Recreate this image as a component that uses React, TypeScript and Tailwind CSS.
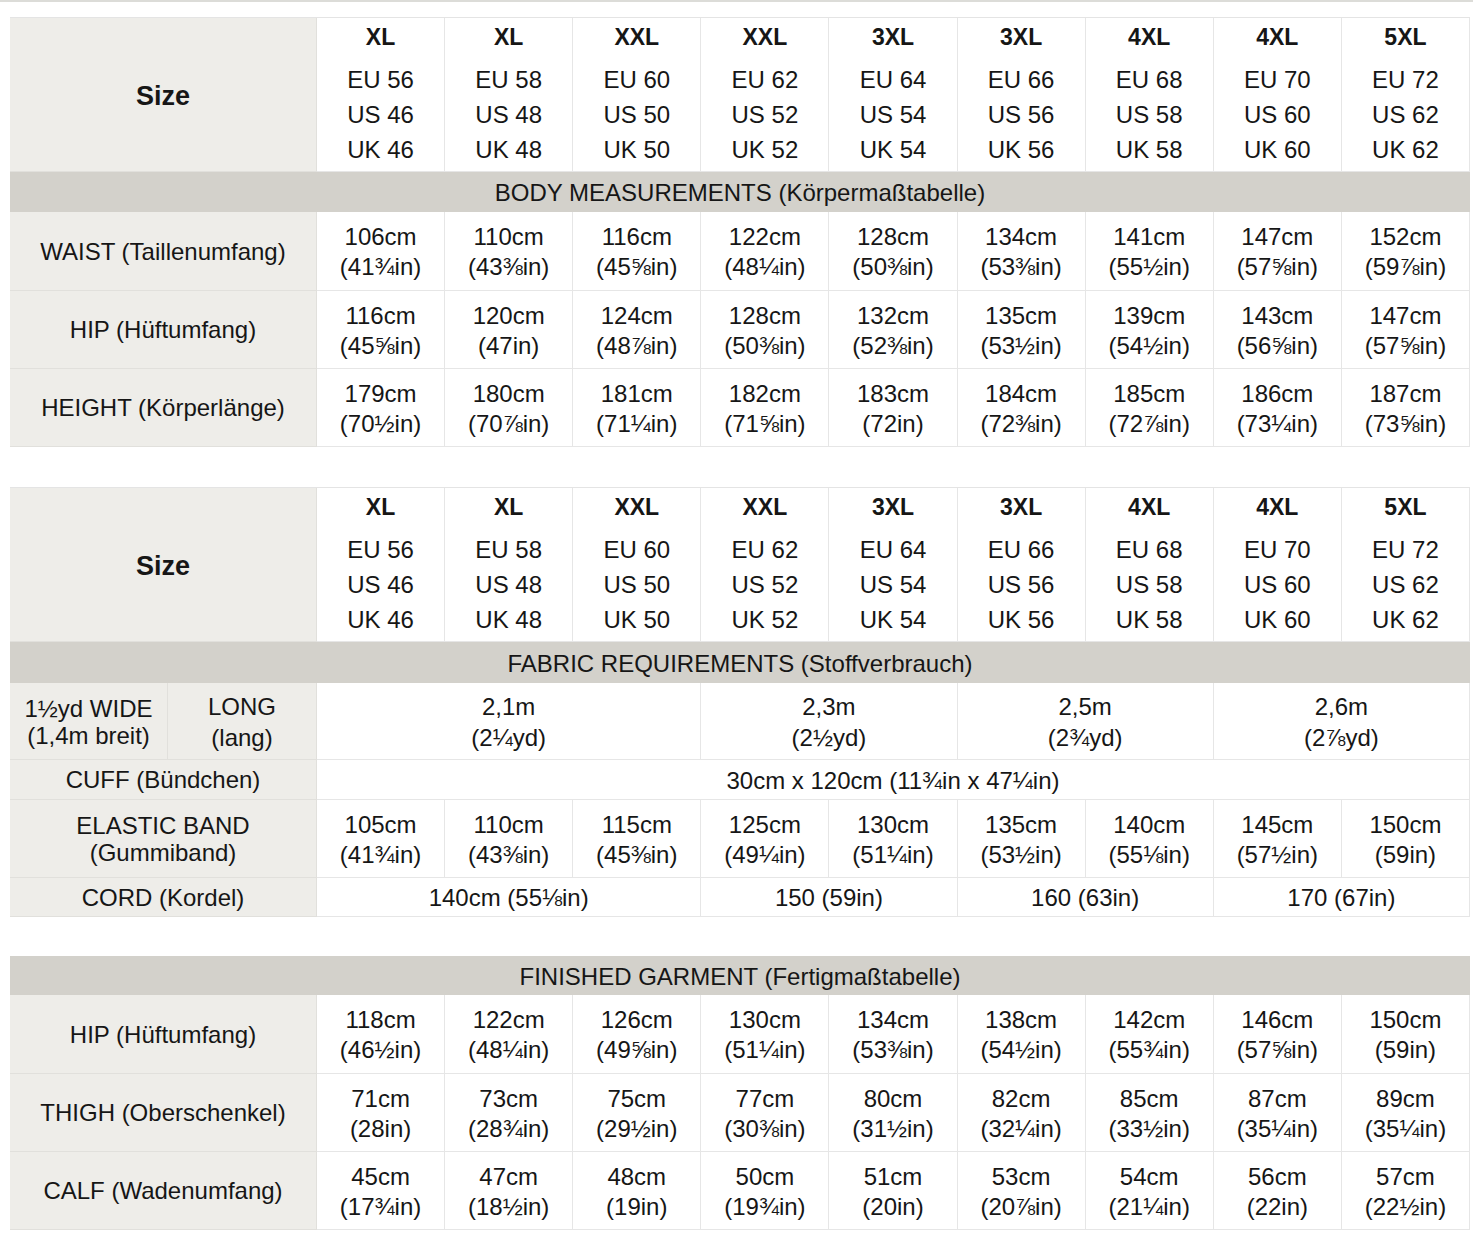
import React from "react";

const GRID =
  "grid grid-cols-[158px_149px_repeat(9,minmax(0,1fr))] w-[1460px]";
const LABEL =
  "bg-[#eeede9] border-b border-r border-[#e1e0dc] flex flex-col items-center justify-center text-center pt-[1px]";
const CELL =
  "bg-white border-b border-r border-[#e6e6e6] flex flex-col items-center justify-center text-center pt-[2px]";
const BAR =
  "col-span-11 bg-[#d3d1cb] flex items-center justify-center leading-none pt-[2px]";

const sizes = ["XL", "XL", "XXL", "XXL", "3XL", "3XL", "4XL", "4XL", "5XL"];
const eu = [56, 58, 60, 62, 64, 66, 68, 70, 72];
const us = [46, 48, 50, 52, 54, 56, 58, 60, 62];

type Pair = [string, string];

const body: { label: string; vals: Pair[] }[] = [
  {
    label: "WAIST (Taillenumfang)",
    vals: [
      ["106cm", "(41¾in)"],
      ["110cm", "(43⅜in)"],
      ["116cm", "(45⅝in)"],
      ["122cm", "(48¼in)"],
      ["128cm", "(50⅜in)"],
      ["134cm", "(53⅜in)"],
      ["141cm", "(55½in)"],
      ["147cm", "(57⅝in)"],
      ["152cm", "(59⅞in)"],
    ],
  },
  {
    label: "HIP (Hüftumfang)",
    vals: [
      ["116cm", "(45⅝in)"],
      ["120cm", "(47in)"],
      ["124cm", "(48⅞in)"],
      ["128cm", "(50⅜in)"],
      ["132cm", "(52⅜in)"],
      ["135cm", "(53½in)"],
      ["139cm", "(54½in)"],
      ["143cm", "(56⅝in)"],
      ["147cm", "(57⅝in)"],
    ],
  },
  {
    label: "HEIGHT (Körperlänge)",
    vals: [
      ["179cm", "(70½in)"],
      ["180cm", "(70⅞in)"],
      ["181cm", "(71¼in)"],
      ["182cm", "(71⅝in)"],
      ["183cm", "(72in)"],
      ["184cm", "(72⅜in)"],
      ["185cm", "(72⅞in)"],
      ["186cm", "(73¼in)"],
      ["187cm", "(73⅝in)"],
    ],
  },
];

const elastic: Pair[] = [
  ["105cm", "(41¾in)"],
  ["110cm", "(43⅜in)"],
  ["115cm", "(45⅜in)"],
  ["125cm", "(49¼in)"],
  ["130cm", "(51¼in)"],
  ["135cm", "(53½in)"],
  ["140cm", "(55⅛in)"],
  ["145cm", "(57½in)"],
  ["150cm", "(59in)"],
];

const finished: { label: string; vals: Pair[] }[] = [
  {
    label: "HIP (Hüftumfang)",
    vals: [
      ["118cm", "(46½in)"],
      ["122cm", "(48¼in)"],
      ["126cm", "(49⅝in)"],
      ["130cm", "(51¼in)"],
      ["134cm", "(53⅜in)"],
      ["138cm", "(54½in)"],
      ["142cm", "(55¾in)"],
      ["146cm", "(57⅝in)"],
      ["150cm", "(59in)"],
    ],
  },
  {
    label: "THIGH (Oberschenkel)",
    vals: [
      ["71cm", "(28in)"],
      ["73cm", "(28¾in)"],
      ["75cm", "(29½in)"],
      ["77cm", "(30⅜in)"],
      ["80cm", "(31½in)"],
      ["82cm", "(32¼in)"],
      ["85cm", "(33½in)"],
      ["87cm", "(35¼in)"],
      ["89cm", "(35¼in)"],
    ],
  },
  {
    label: "CALF (Wadenumfang)",
    vals: [
      ["45cm", "(17¾in)"],
      ["47cm", "(18½in)"],
      ["48cm", "(19in)"],
      ["50cm", "(19¾in)"],
      ["51cm", "(20in)"],
      ["53cm", "(20⅞in)"],
      ["54cm", "(21¼in)"],
      ["56cm", "(22in)"],
      ["57cm", "(22½in)"],
    ],
  },
];

function SizeHeader() {
  return (
    <>
      <div className={`${LABEL} col-span-2`}>
        <span className="font-bold text-[27px] leading-none mt-[3px]">Size</span>
      </div>
      {sizes.map((s, i) => (
        <div
          key={i}
          className="bg-white border-b border-r border-[#e6e6e6] flex flex-col items-center pt-[2px] text-center"
        >
          <div className="font-bold text-[23px] leading-[35px]">{s}</div>
          <div className="mt-[7px] leading-[35px]">EU {eu[i]}</div>
          <div className="leading-[35px]">US {us[i]}</div>
          <div className="leading-[35px]">UK {us[i]}</div>
        </div>
      ))}
    </>
  );
}

function ValueRows({ rows }: { rows: { label: string; vals: Pair[] }[] }) {
  return (
    <>
      {rows.map((r) => (
        <React.Fragment key={r.label}>
          <div className={`${LABEL} col-span-2`}>
            <span className="leading-[30px]">{r.label}</span>
          </div>
          {r.vals.map((v, i) => (
            <div key={i} className={CELL}>
              <div className="leading-[30px]">{v[0]}</div>
              <div className="leading-[30px]">{v[1]}</div>
            </div>
          ))}
        </React.Fragment>
      ))}
    </>
  );
}

export default function App() {
  return (
    <div
      className="w-[1473px] min-h-[1244px] bg-white text-[#161616] text-[24px]"
      style={{ fontFamily: '"Liberation Sans", Arial, sans-serif' }}
    >
      <div className="h-[2px] bg-[#dcdcd8]" />
      <div className="pl-[10px] pt-[15px] flex flex-col gap-[40px]">
        {/* Table 1 */}
        <div className={`${GRID} border-t border-[#e4e4e4] grid-rows-[154px_40px_79px_78px_78px]`}>
          <SizeHeader />
          <div className={BAR}>BODY MEASUREMENTS (Körpermaßtabelle)</div>
          <ValueRows rows={body} />
        </div>

        {/* Table 2 */}
        <div className={`${GRID} border-t border-[#e4e4e4] grid-rows-[154px_41px_77px_40px_78px_39px]`}>
          <SizeHeader />
          <div className={BAR}>FABRIC REQUIREMENTS (Stoffverbrauch)</div>

          <div className={LABEL}>
            <div className="leading-[27px]">1½yd WIDE</div>
            <div className="leading-[27px]">(1,4m breit)</div>
          </div>
          <div className={LABEL}>
            <div className="leading-[31px]">LONG</div>
            <div className="leading-[31px]">(lang)</div>
          </div>
          <div className={`${CELL} col-span-3`}>
            <div className="leading-[31px]">2,1m</div>
            <div className="leading-[31px]">(2¼yd)</div>
          </div>
          <div className={`${CELL} col-span-2`}>
            <div className="leading-[31px]">2,3m</div>
            <div className="leading-[31px]">(2½yd)</div>
          </div>
          <div className={`${CELL} col-span-2`}>
            <div className="leading-[31px]">2,5m</div>
            <div className="leading-[31px]">(2¾yd)</div>
          </div>
          <div className={`${CELL} col-span-2`}>
            <div className="leading-[31px]">2,6m</div>
            <div className="leading-[31px]">(2⅞yd)</div>
          </div>

          <div className={`${LABEL} col-span-2`}>
            <span className="leading-none">CUFF (Bündchen)</span>
          </div>
          <div className={`${CELL} col-span-9`}>
            <span className="leading-none">30cm x 120cm (11¾in x 47¼in)</span>
          </div>

          <div className={`${LABEL} col-span-2`}>
            <div className="leading-[27px]">ELASTIC BAND</div>
            <div className="leading-[27px]">(Gummiband)</div>
          </div>
          {elastic.map((v, i) => (
            <div key={i} className={CELL}>
              <div className="leading-[30px]">{v[0]}</div>
              <div className="leading-[30px]">{v[1]}</div>
            </div>
          ))}

          <div className={`${LABEL} col-span-2`}>
            <span className="leading-none">CORD (Kordel)</span>
          </div>
          <div className={`${CELL} col-span-3`}>
            <span className="leading-none">140cm (55⅛in)</span>
          </div>
          <div className={`${CELL} col-span-2`}>
            <span className="leading-none">150 (59in)</span>
          </div>
          <div className={`${CELL} col-span-2`}>
            <span className="leading-none">160 (63in)</span>
          </div>
          <div className={`${CELL} col-span-2`}>
            <span className="leading-none">170 (67in)</span>
          </div>
        </div>

        {/* Table 3 */}
        <div className={`${GRID} grid-rows-[39px_79px_78px_78px] -mt-px`}>
          <div className={BAR}>FINISHED GARMENT (Fertigmaßtabelle)</div>
          <ValueRows rows={finished} />
        </div>
      </div>
    </div>
  );
}
